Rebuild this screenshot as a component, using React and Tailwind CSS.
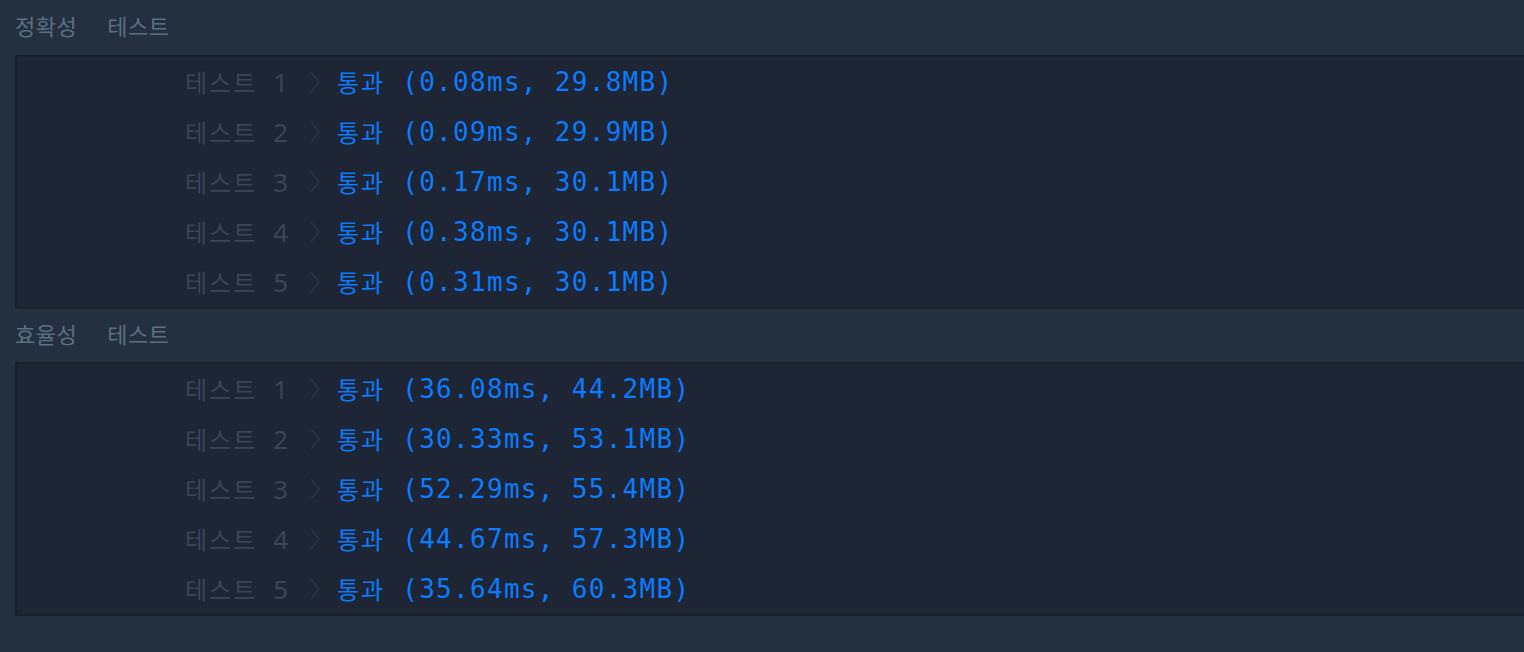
import React from 'react';

const accuracy = [
  '0.08ms, 29.8MB',
  '0.09ms, 29.9MB',
  '0.17ms, 30.1MB',
  '0.38ms, 30.1MB',
  '0.31ms, 30.1MB',
];

const efficiency = [
  '36.08ms, 44.2MB',
  '30.33ms, 53.1MB',
  '52.29ms, 55.4MB',
  '44.67ms, 57.3MB',
  '35.64ms, 60.3MB',
];

const korean = { fontFamily: '"Noto Sans CJK KR", "Noto Sans", sans-serif' };
const mono = { fontFamily: '"DejaVu Sans Mono", "Noto Sans CJK KR", monospace' };

function Chevron() {
  return (
    <svg width="12" height="24" viewBox="0 0 12 24" className="shrink-0">
      <path d="M2 2 L10 12 L2 22" fill="none" stroke="#2c3745" strokeWidth="1.3" />
    </svg>
  );
}

function Section({ title, results, headerClass }) {
  return (
    <>
      <div className={`${headerClass} flex items-center pl-[15px] pb-[4px] text-[22px] tracking-[0.5px] text-[#5b6f80]`} style={korean}>
        <span>{title}</span>
        <span className="ml-[30px]">테스트</span>
      </div>
      <div className="ml-[15px] border-2 border-r-0 border-[#1a202a] bg-[#1e2535]">
        {results.map((r, i) => (
          <div key={i} className="h-[50px] flex items-center pl-[168px]">
            <span className="flex items-center w-[124px] text-[#394656]">
              <span className="text-[24px] tracking-[2px]" style={korean}>테스트</span>
              <span className="ml-[16px] text-[26px]" style={{ fontFamily: '"Noto Sans", sans-serif' }}>{i + 1}</span>
            </span>
            <Chevron />
            <span className="ml-[16px] text-[24px] text-[#0a7cff] tracking-[2px]" style={korean}>통과</span>
            <span className="ml-[17px] text-[26px] text-[#0a7cff] tracking-[1.3px]" style={mono}>
              ({r})
            </span>
          </div>
        ))}
      </div>
    </>
  );
}

export default function App() {
  return (
    <div className="min-h-screen w-full overflow-hidden bg-[#243040]">
      <Section title="정확성" results={accuracy} headerClass="h-[55px]" />
      <Section title="효율성" results={efficiency} headerClass="h-[53px]" />
    </div>
  );
}
